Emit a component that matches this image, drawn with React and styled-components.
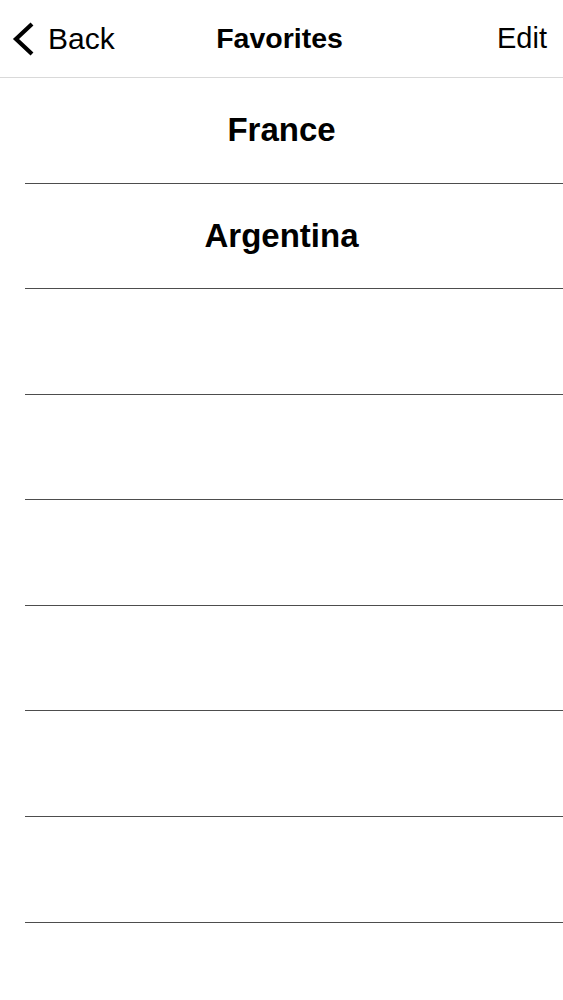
import React from "react";
import styled, { createGlobalStyle } from "styled-components";

const Global = createGlobalStyle`
  html, body { margin: 0; padding: 0; background: #fff; }
  body { font-family: "Liberation Sans", Arial, sans-serif; color: #000; }
  * { box-sizing: border-box; }
`;

const Page = styled.div`
  width: 563px;
  height: 1000px;
  overflow: hidden;
  background: #fff;
`;

const NavBar = styled.header`
  height: 78px;
  border-bottom: 1px solid #d9d9d9;
  display: grid;
  grid-template-columns: 1fr auto 1fr;
  align-items: center;
  padding: 0 16px 0 12px;
`;

const BackButton = styled.button`
  justify-self: start;
  display: flex;
  align-items: center;
  gap: 12px;
  background: none;
  border: 0;
  padding: 0;
  font: 400 30px "Liberation Sans", Arial, sans-serif;
  color: #000;
  svg { display: block; }
`;

const Title = styled.h1`
  margin: 0;
  font: 700 28.5px "Liberation Sans", Arial, sans-serif;
  color: #000;
`;

const EditButton = styled.button`
  justify-self: end;
  background: none;
  border: 0;
  padding: 0;
  font: 400 29px "Liberation Sans", Arial, sans-serif;
  color: #000;
`;

const List = styled.ul`
  list-style: none;
  margin: 0;
  padding: 0;
`;

const Row = styled.li`
  height: 105.57px;
  margin-left: 25px;
  border-bottom: 1px solid #4d4d4d;
  display: flex;
  align-items: center;
  justify-content: center;
`;

const RowLabel = styled.span`
  font: 700 33px "Liberation Sans", Arial, sans-serif;
  color: #000;
  margin-left: -25px;
`;

const items = ["France", "Argentina", "", "", "", "", "", ""];

export default function App() {
  return (
    <Page>
      <Global />
      <NavBar>
        <BackButton>
          <svg width="24" height="36" viewBox="0 0 24 36">
            <polyline points="20,3 4,18 20,33" fill="none" stroke="#000" strokeWidth="4.2" strokeLinecap="butt" strokeLinejoin="miter" />
          </svg>
          Back
        </BackButton>
        <Title>Favorites</Title>
        <EditButton>Edit</EditButton>
      </NavBar>
      <List>
        {items.map((name, i) => (
          <Row key={i}>
            <RowLabel>{name}</RowLabel>
          </Row>
        ))}
      </List>
    </Page>
  );
}
